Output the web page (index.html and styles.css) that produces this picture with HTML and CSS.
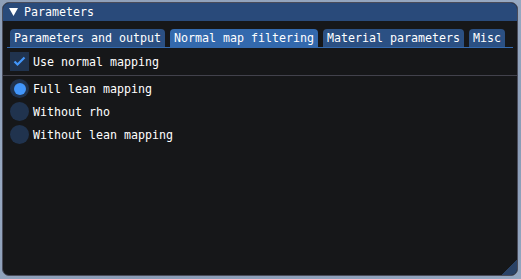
FILE: index.html
```html
<!DOCTYPE html>
<html lang="en">
<head>
    <meta charset="UTF-8">
    <meta name="viewport" content="width=device-width, initial-scale=1.0">
    <title>Parameters</title>
    <link rel="stylesheet" href="styles.css">
</head>
<body>
    <div class="window">
        <div class="titlebar">
            <svg class="arrow" width="9" height="8" viewBox="0 0 9 8">
                <polygon points="0,0 9,0 4.5,8" fill="#fff"/>
            </svg>
            <span class="title">Parameters</span>
        </div>
        <div class="content">
            <div class="tabbar">
                <div class="tab">Parameters and output</div>
                <div class="tab active">Normal map filtering</div>
                <div class="tab">Material parameters</div>
                <div class="tab">Misc</div>
            </div>

            <div class="row">
                <span class="checkbox">
                    <svg width="19" height="19" viewBox="0 0 19 19">
                        <polyline points="4.5,9.5 7.5,12.5 14.5,5.5" fill="none" stroke="#4296fa" stroke-width="2.2"/>
                    </svg>
                </span>
                <span class="label">Use normal mapping</span>
            </div>

            <div class="separator"></div>

            <div class="row">
                <span class="radio checked"></span>
                <span class="label">Full lean mapping</span>
            </div>
            <div class="row">
                <span class="radio"></span>
                <span class="label">Without rho</span>
            </div>
            <div class="row">
                <span class="radio"></span>
                <span class="label">Without lean mapping</span>
            </div>
        </div>
        <div class="grip"></div>
    </div>
</body>
</html>
```

FILE: styles.css
```css
body {
    margin: 0;
    height: 279px;
    overflow: hidden;
    background: linear-gradient(160deg, #8e9fb8 0%, #97a9c2 40%, #8a9cb6 70%, #93a6c0 100%);
    font-family: "DejaVu Sans Mono", "Liberation Mono", monospace;
    font-size: 11.63px;
    color: #fff;
}

.window {
    position: relative;
    box-sizing: border-box;
    margin: 2px 0 0 2px;
    width: 516px;
    height: 274px;
    background: #161719;
    border: 1px solid #4a4c5a;
    border-radius: 7px;
    overflow: hidden;
}

.titlebar {
    height: 18px;
    background: #294a7a;
    display: flex;
    align-items: center;
    padding-left: 6px;
}

.arrow {
    display: block;
    margin-right: 6px;
}

.content {
    padding: 8px 7px 0 7px;
    display: flex;
    flex-direction: column;
    gap: 4px;
}

.tabbar {
    display: flex;
    gap: 5px;
    height: 18px;
    margin: 0 -3px;
    padding: 0 3px;
    border-bottom: 1px solid #3369ad;
}

.tab {
    flex-shrink: 0;
    background: #2b5083;
    border-radius: 4px 4px 0 0;
    padding: 0 4px;
    line-height: 19px;
    height: 18px;
    white-space: nowrap;
}

.tab.active {
    background: #3369ad;
}

.row {
    display: flex;
    align-items: center;
    gap: 4px;
    height: 19px;
}

.checkbox {
    width: 19px;
    height: 19px;
    background: #20334e;
    display: block;
}

.checkbox svg {
    display: block;
}

.label {
    white-space: nowrap;
}

.separator {
    height: 1px;
    background: #42424c;
    margin: 0 -7px -1px;
}

.radio {
    box-sizing: border-box;
    width: 19px;
    height: 19px;
    border-radius: 50%;
    background: #20334e;
    display: flex;
    align-items: center;
    justify-content: center;
}

.radio.checked::after {
    content: "";
    width: 12px;
    height: 12px;
    border-radius: 50%;
    background: #4296fa;
}

.grip {
    position: absolute;
    right: 0;
    bottom: 0;
    width: 15px;
    height: 15px;
    background: linear-gradient(135deg, transparent 50%, #2a4266 50%);
}
```
